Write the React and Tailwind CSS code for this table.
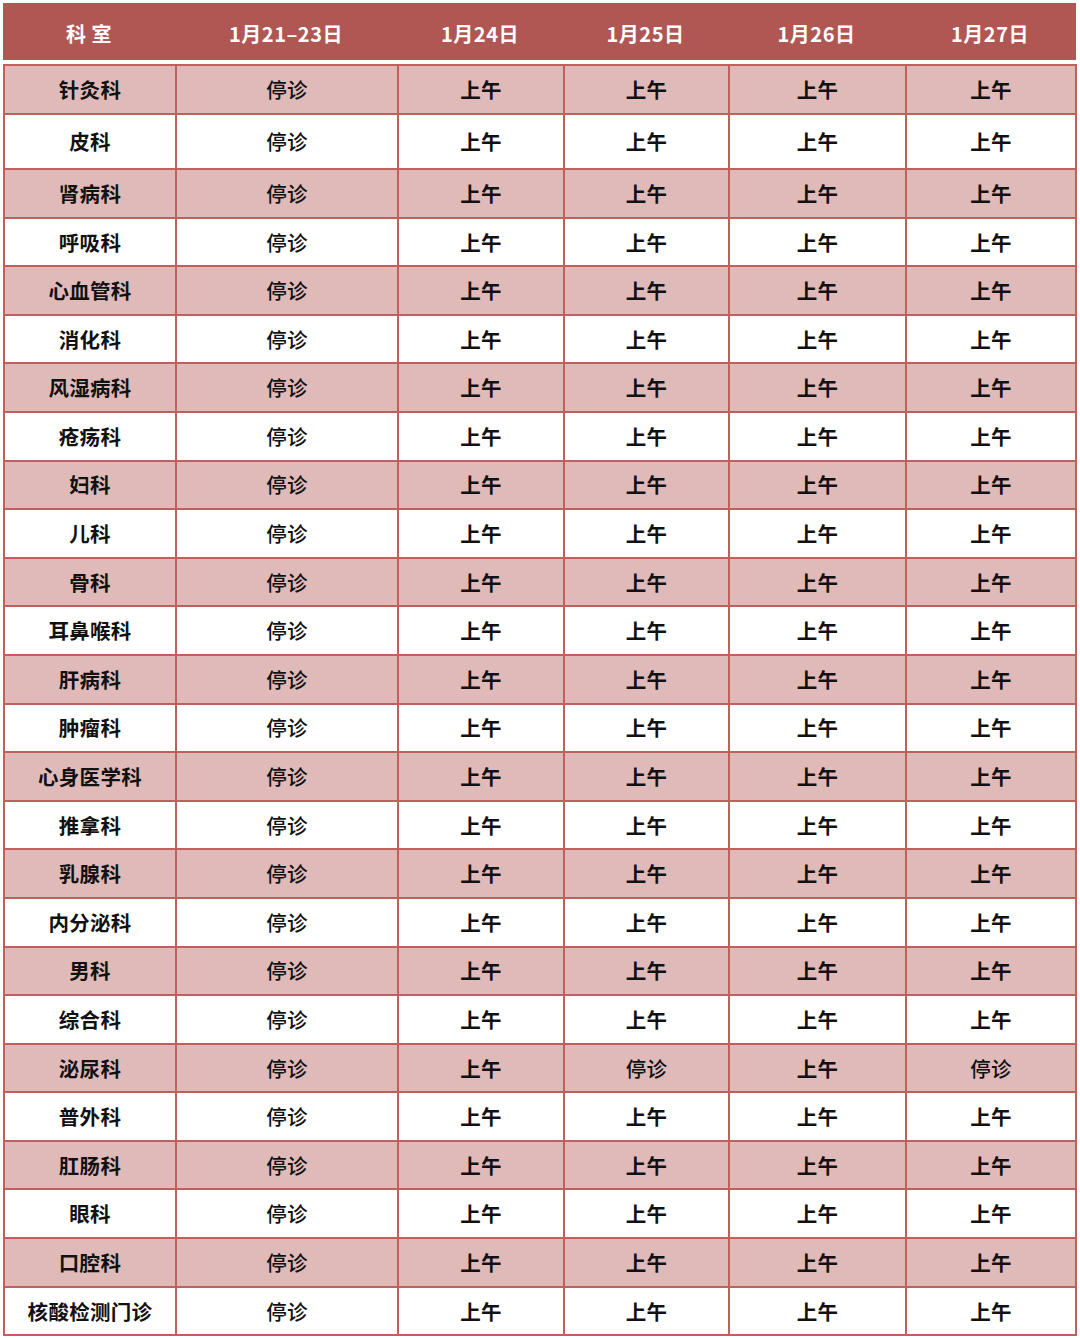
import React from "react";

const depts = [
  "针灸科","皮科","肾病科","呼吸科","心血管科","消化科","风湿病科","疮疡科","妇科","儿科","骨科","耳鼻喉科","肝病科","肿瘤科","心身医学科","推拿科","乳腺科","内分泌科","男科","综合科","泌尿科","普外科","肛肠科","眼科","口腔科","核酸检测门诊",
];

const cols = "grid grid-cols-[172px_222px_166px_165px_177px_170px]";

function Cell({ children, bold }) {
  return (
    <div
      className={
        "flex items-center justify-center border-r-2 border-b-2 border-[#c0605c] text-[20.5px] text-[#111] tracking-[0.3px] " +
        (bold ? "font-bold" : "font-medium")
      }
    >
      {children}
    </div>
  );
}

export default function App() {
  return (
    <div
      className="w-[1080px] h-[1338px] bg-white pt-[3px] pl-[3px]"
      style={{ fontFamily: '"Noto Sans CJK SC", "Noto Sans", sans-serif' }}
    >
      <div className={cols + " h-[57px] w-[1073px] bg-[#b05753] text-white text-[20px] font-bold tracking-[0.5px]"}>
        {["科 室", "1月21–23日", "1月24日", "1月25日", "1月26日", "1月27日"].map((t, i) => (
          <div key={i} className="flex items-center justify-center pt-[5px]">{t}</div>
        ))}
      </div>
      <div className="mt-[4px] w-[1074px] border-l-2 border-t-2 border-[#c0605c]">
        {depts.map((d, i) => {
          const h = i === 0 ? "h-[49px]" : i === 1 ? "h-[55px]" : "h-[48.6px]";
          const bg = i % 2 === 0 ? "bg-[#dfbab9]" : "bg-white";
          const uro = d === "泌尿科";
          return (
            <div key={d} className={cols + " " + h + " " + bg}>
              <Cell bold>{d}</Cell>
              <Cell>停诊</Cell>
              <Cell bold>上午</Cell>
              {uro ? <Cell>停诊</Cell> : <Cell bold>上午</Cell>}
              <Cell bold>上午</Cell>
              {uro ? <Cell>停诊</Cell> : <Cell bold>上午</Cell>}
            </div>
          );
        })}
      </div>
    </div>
  );
}
